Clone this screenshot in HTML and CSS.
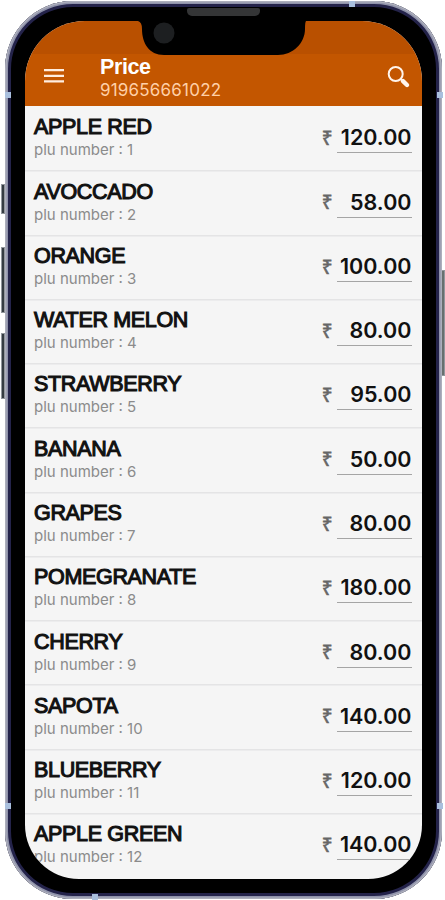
FILE: index.html
```html
<!DOCTYPE html>
<html lang="en">
<head>
<meta charset="utf-8">
<title>Price</title>
<link rel="stylesheet" href="styles.css">
</head>
<body>
<div class="stage">
  <i class="key mute"></i><i class="key up"></i><i class="key down"></i><i class="key power"></i>
  <div class="phone">
    <div class="screen">
      <header class="bar">
        <svg class="menu" width="20" height="16" viewBox="0 0 20 16" stroke="#ffeddf" stroke-width="2.2"><path d="M0 2.2h20M0 7.8h20M0 13.4h20"/></svg>
        <div class="heading"><h1>Price</h1><p>919656661022</p></div>
        <svg class="search" width="24" height="24" viewBox="0 0 24 24" fill="none" stroke="#fff4eb"><circle cx="8.7" cy="9" r="7" stroke-width="2"/><path d="M13.6 14l2 2" stroke-width="2"/><path d="M16 16.2l4 3.8" stroke-width="4.4" stroke-linecap="round"/></svg>
      </header>
      <main class="list" id="list"></main>
    </div>
  </div>
  <svg class="notch" width="168" height="48" viewBox="0 0 168 48"><path d="M0 0V14Q4 15 4 22C4 36 11 48 26 48H140C155 48 167 36 167 22Q167 15 168 14V0Z"/><circle cx="26" cy="26" r="10.5" fill="#1d1f21"/></svg>
  <i class="speaker"></i>
  <i class="band tl"></i><i class="band tr"></i><i class="band bl"></i><i class="band br"></i><i class="band top"></i><i class="band bottom"></i>
</div>
<script src="items.js"></script>
</body>
</html>
```
FILE: items.js
```js
const items = [
  ["APPLE RED", "120.00"], ["AVOCCADO", "58.00"], ["ORANGE", "100.00"],
  ["WATER MELON", "80.00"], ["STRAWBERRY", "95.00"], ["BANANA", "50.00"],
  ["GRAPES", "80.00"], ["POMEGRANATE", "180.00"], ["CHERRY", "80.00"],
  ["SAPOTA", "140.00"], ["BLUEBERRY", "120.00"], ["APPLE GREEN", "140.00"]
];
document.getElementById("list").innerHTML = items.map(([name, price], i) => `
  <section class="row">
    <div class="item"><h2>${name}</h2><p>plu number : ${i + 1}</p></div>
    <span class="rupee">₹</span><span class="price">${price}</span>
  </section>`).join("");
```
FILE: styles.css
```css
* { box-sizing: border-box; }
body { margin: 0; background: #fff; font-family: "Liberation Sans", sans-serif; overflow: hidden; }
h1, h2, p { margin: 0; }
.stage { position: relative; width: 445px; height: 900px; padding: 1px 3px 1px 5px; }
.phone {
  position: relative; height: 898px; padding: 20px 20px 20px 20px;
  border-radius: 68px; background: #000;
  box-shadow: inset 0 0 0 1.5px #adafbc, inset 0 0 0 3px #8f92aa, inset 0 0 0 6px #24234a;
}
.screen { height: 858px; border-radius: 60px 60px 54px 54px; overflow: hidden; background: #f5f5f5; }
.bar {
  display: flex; align-items: flex-start; height: 85px; padding: 33px 11px 0 19px;
  background: linear-gradient(#b95000 0 33px, #c35600 33px);
}
.menu { margin-top: 14px; }
.heading { margin-left: 36px; flex: 1; }
.heading h1 { font-size: 21.5px; line-height: 27px; color: #fff; letter-spacing: -.4px; }
.heading p { font-family: Inter, sans-serif; font-size: 17px; line-height: 18px; letter-spacing: .2px; color: #ffd0a8; }
.search { margin-top: 11px; }
.row { display: flex; height: 64.27px; padding: 0 10.5px 0 9px; }
.row + .row { box-shadow: inset 0 1.5px #e4e4e5; }
.item { flex: 1; padding-top: 9.4px; }
.item h2 { font-size: 21.5px; line-height: 25px; font-weight: 400; letter-spacing: -.33px; color: #111; -webkit-text-stroke: 1.1px #111; white-space: nowrap; }
.item p { font-family: Inter, sans-serif; font-size: 15px; line-height: 20px; letter-spacing: 0; color: #8b8b8b; }
.rupee { margin: 22px 4px 0 0; font-family: "Noto Sans", "DejaVu Sans", sans-serif; font-size: 19px; line-height: 21px; color: #666; -webkit-text-stroke: .6px #666; }
.price {
  width: 75px; height: 29px; margin-top: 18.4px; border-bottom: 1.3px solid #a5a5a5;
  text-align: right; font-family: Inter, sans-serif; font-weight: 600; font-size: 21.5px; line-height: 26px; color: #111;
}
.notch { position: absolute; left: 138px; top: 7px; }
.speaker { position: absolute; left: 187px; top: 8px; width: 73px; height: 8px; border-radius: 2px 2px 5px 5px; background: #343536; }
.key { position: absolute; width: 4px; background: #343b41; border: 1px solid #92969c; }
.mute { left: 1px; top: 184px; height: 30px; }
.up { left: 1px; top: 247px; height: 66px; }
.down { left: 1px; top: 333px; height: 66px; }
.power { left: 441px; top: 270px; height: 106px; background: #68706f; }
.band { position: absolute; width: 6px; height: 6px; background: #a9bfdd; }
.tl { left: 5px; top: 92px; }
.tr { left: 437px; top: 92px; }
.bl { left: 5px; top: 803px; }
.br { left: 437px; top: 803px; }
.top { left: 349px; top: 1px; }
.bottom { left: 92px; top: 894px; }
```
